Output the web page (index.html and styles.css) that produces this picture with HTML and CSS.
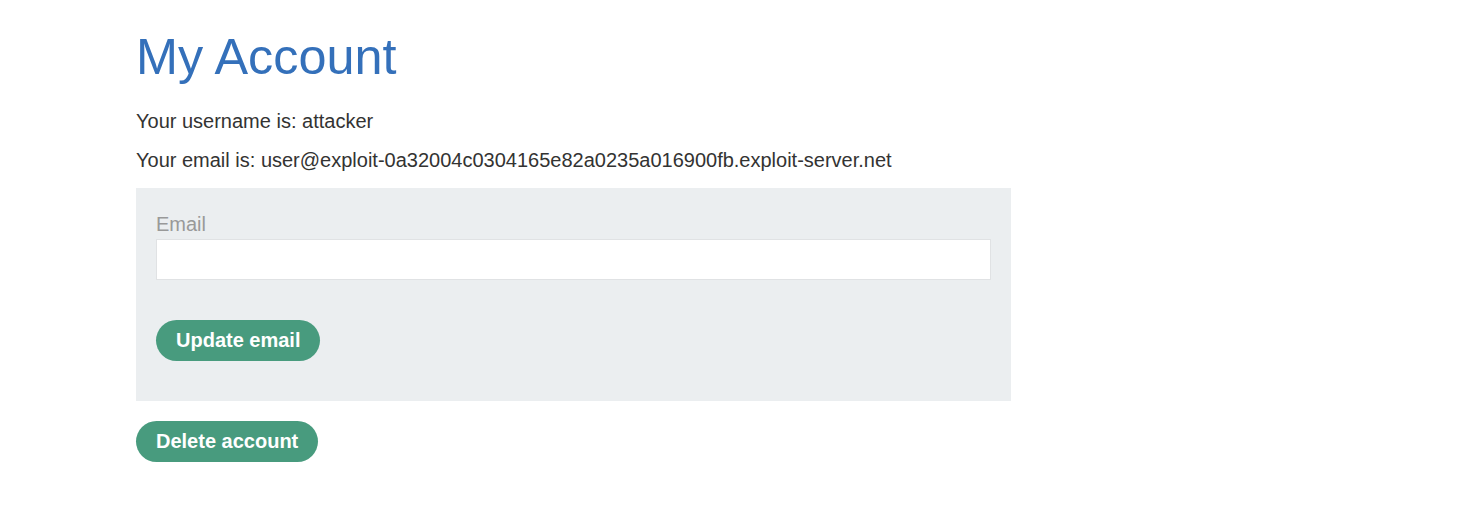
FILE: index.html
```html
<!DOCTYPE html>
<html>
<head>
<meta charset="utf-8">
<link rel="stylesheet" href="styles.css">
</head>
<body>
<div class="container">
  <h1 class="title">My Account</h1>
  <p class="info">Your username is: attacker</p>
  <p class="info">Your email is: <span id="user-email">user@exploit-0a32004c0304165e82a0235a016900fb.exploit-server.net</span></p>
  <form class="panel">
    <label class="label">Email</label>
    <input class="input" type="email" name="email">
    <button class="btn" type="button">Update email</button>
  </form>
  <button class="btn" type="button">Delete account</button>
</div>
</body>
</html>
```
FILE: styles.css
```css
html, body {
  margin: 0;
  padding: 0;
  background: #fff;
}
body {
  font-family: "Liberation Sans", Arial, sans-serif;
  color: #333332;
  font-size: 20px;
}
.container {
  padding: 29px 0 0 136px;
  width: 875px;
}
.title {
  font-size: 50.4px;
  font-weight: normal;
  color: #3470ba;
  margin: 0 0 26px 0;
  line-height: 55px;
}
.info {
  margin: 0 0 16px 0;
  line-height: 23px;
}
.panel {
  background: #ebeef0;
  padding: 22px 20px 40px 20px;
  margin: 0 0 20px 0;
  display: flex;
  flex-direction: column;
  align-items: flex-start;
}
.label {
  color: #999;
  font-size: 20px;
  line-height: 29px;
}
.input {
  box-sizing: border-box;
  width: 100%;
  height: 41px;
  border: 1px solid #e0e2e4;
  background: #fff;
  margin: 0 0 40px 0;
  font-size: 16px;
}
.btn {
  background: #489b7e;
  color: #fff;
  border: 0;
  border-radius: 21px;
  height: 41px;
  padding: 0 20px;
  font-family: "Liberation Sans", Arial, sans-serif;
  font-size: 20px;
  font-weight: bold;
  cursor: pointer;
}
```
